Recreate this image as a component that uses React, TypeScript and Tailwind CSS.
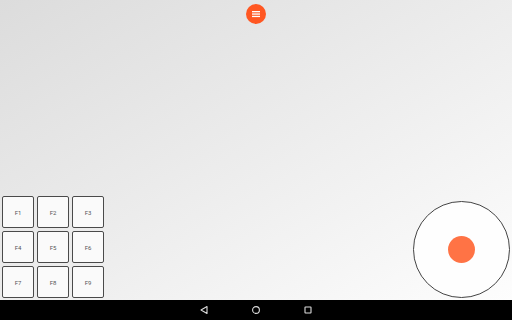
import React from "react";

const keys = ["F1", "F2", "F3", "F4", "F5", "F6", "F7", "F8", "F9"];

export default function App() {
  return (
    <div className="w-[512px] h-[320px] flex flex-col overflow-hidden" style={{ fontFamily: "Roboto, 'Liberation Sans', sans-serif" }}>
      <div className="h-[300px] flex flex-col justify-between bg-linear-to-br from-[#dcdcdc] to-[#fdfdfd]">
        <div className="flex justify-center pt-[4px]">
          <button className="w-[20px] h-[20px] rounded-full bg-[#ff5722] flex items-center justify-center">
            <svg width="10" height="10" viewBox="0 0 10 10">
              <rect x="1" y="2" width="8" height="1.3" fill="#fff" />
              <rect x="1" y="4.4" width="8" height="1.3" fill="#fff" />
              <rect x="1" y="6.8" width="8" height="1.3" fill="#fff" />
            </svg>
          </button>
        </div>
        <div className="flex items-end justify-between pl-[2px] pr-[2px] pb-[2px]">
          <div className="grid grid-cols-[32px_32px_32px] gap-[3px]">
            {keys.map((k) => (
              <div
                key={k}
                className="w-[32px] h-[32px] rounded-[2px] border border-[#4a4a4a] bg-[#fafafa] flex items-center justify-center text-[6px] text-[#555]"
              >
                {k}
              </div>
            ))}
          </div>
          <div className="w-[97px] h-[97px] rounded-full border border-[#444] bg-[#fefefe] flex items-center justify-center">
            <div className="w-[27px] h-[27px] rounded-full bg-[#ff7345]" />
          </div>
        </div>
      </div>
      <div className="h-[20px] bg-black flex items-center justify-center gap-[42px]">
        <svg width="10" height="10" viewBox="0 0 10 10">
          <path d="M8 1.5 L2 5 L8 8.5 Z" fill="none" stroke="#ddd" strokeWidth="1.1" strokeLinejoin="round" />
        </svg>
        <svg width="10" height="10" viewBox="0 0 10 10">
          <circle cx="5" cy="5" r="3.4" fill="none" stroke="#ddd" strokeWidth="1.1" />
        </svg>
        <svg width="10" height="10" viewBox="0 0 10 10">
          <rect x="2" y="2" width="6" height="6" rx="0.5" fill="none" stroke="#ddd" strokeWidth="1.1" />
        </svg>
      </div>
    </div>
  );
}
